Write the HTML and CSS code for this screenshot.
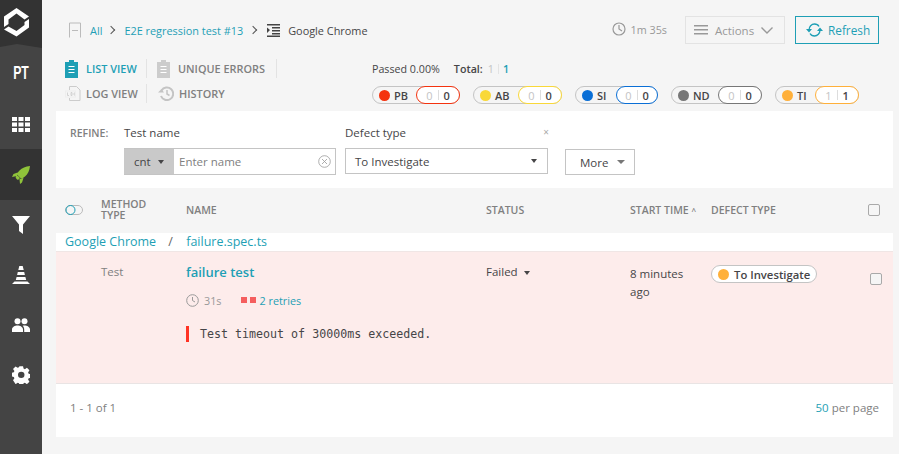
FILE: index.html
```html
<!DOCTYPE html>
<html>
<head>
<meta charset="UTF-8">
<title>Google Chrome - failure test</title>
<link rel="stylesheet" href="styles.css">
</head>
<body>
<div class="app">
	<nav class="sidebar">
		<div class="logo">
			<svg width="42" height="48" viewBox="0 0 42 48"><path d="M0 0H42V48L17 44L0 47Z" fill="#333"/><path d="M4 16.500V27L8.500 24V19.500L16.500 13.500L24.500 19.500L29 16.500L16.500 8ZM29 19V27.500L16.500 36.500L4 29.500L8.500 26.500L16.500 31L24.500 25V22Z" fill="#fff"/></svg>
		</div>
		<div class="nav-item nav-pt">PT</div>
		<div class="nav-item">
			<svg width="18" height="15" viewBox="0 0 18 15" fill="#fff"><path d="M0 0h5v4H0zM6.500 0h5v4h-5zM13 0h5v4h-5zM0 5.500h5v4H0zM6.500 5.500h5v4h-5zM13 5.500h5v4h-5zM0 11h5v4H0zM6.500 11h5v4h-5zM13 11h5v4h-5z"/></svg>
		</div>
		<div class="nav-item nav-active">
			<svg width="18" height="18" viewBox="0 0 18 18" fill="#8fc33a"><path d="M18 0C13.500.5 10 2 7.500 4.500L4.500 8l5 5 3.500-2.500C16 8 17.500 4.500 18 0zM5.500 6.500L1.500 8 0 11l5-1zM11.500 12L10 16.500 8 18l-.5-5zM3.500 11l2-1.500L8 12l-2 2-1.500-1z"/></svg>
		</div>
		<div class="nav-item">
			<svg width="18" height="18" viewBox="0 0 18 18" fill="#fff"><path d="M0 0h18L11 8.500V18L7 15V8.500z"/></svg>
		</div>
		<div class="nav-item">
			<svg width="18" height="18" viewBox="0 0 18 18" fill="#fff"><path d="M7.300 0h3.400l1 4H6.300zM5.800 6h6.400l.7 3H5.100zM4.600 11h8.800l.8 3H3.800zM2.500 15.500h13L18 18H0z"/></svg>
		</div>
		<div class="nav-item">
			<svg width="18" height="14" viewBox="0 0 18 14" fill="#fff"><circle cx="5.500" cy="3.200" r="3"/><circle cx="12.500" cy="3.200" r="3"/><path d="M0 14v-2.500C0 9 3 7.500 5.500 7.500S11 9 11 11.500V14zM12.200 14v-2.500c0-1.500-.5-2.800-1.500-3.800.6-.1 1.200-.2 1.800-.2 2.500 0 5.500 1.500 5.500 4V14z"/></svg>
		</div>
		<div class="nav-item">
			<svg width="18" height="18" viewBox="0 0 24 24" fill="#fff"><path fill-rule="evenodd" d="M9.500 0h5l.7 3.300 1.800.8L19.900 2.200l3.500 3.500-1.900 2.900.8 1.800 3.300.6v5l-3.300.7-.8 1.800 1.900 2.900-3.500 3.500-2.900-1.900-1.800.8-.7 3.300h-5l-.6-3.300-1.800-.8-2.900 1.900L.6 19.500l1.900-2.900-.8-1.800L-1.600 14.100v-5l3.300-.6.800-1.800L.6 3.800 4.100.3 7 2.200l1.800-.8zM12 7.500a4.500 4.500 0 1 0 0 9 4.500 4.500 0 0 0 0-9z" transform="translate(.8 .3) scale(.96)"/></svg>
		</div>
	</nav>

	<main class="content">
		<div class="topbar">
			<div class="crumbs">
				<svg class="crumb-icon" width="12" height="16" viewBox="0 0 12 16" fill="none" stroke="#bbb"><path d="M.5 15.500V1h11v14.500M3 8.500h6"/></svg>
				<a class="link crumb-all">All</a>
				<span class="crumb-sep"></span>
				<a class="link">E2E regression test #13</a>
				<span class="crumb-sep crumb-sep-last"></span>
				<svg class="crumb-icon" width="13" height="13" viewBox="0 0 13 13" fill="#444"><path d="M0 0h13v1.500H0zM5 3h8v1.500H5zM5 6h8v1.500H5zM5 9h8v1.500H5zM0 11.500h13V13H0zM0 3.500L3 6 0 9z"/></svg>
				<span class="crumb-name">Google Chrome</span>
			</div>
			<div class="top-actions">
				<span class="duration">
					<svg width="14" height="14" viewBox="0 0 14 14" fill="none" stroke="#999" stroke-width="1.200"><circle cx="7" cy="7" r="6"/><path d="M7 3v4l3 2"/></svg>
					1m 35s
				</span>
				<div class="btn btn-actions">
					<svg width="14" height="10" viewBox="0 0 14 10" fill="#999"><path d="M0 0h14v1.500H0zM0 4h14v1.500H0zM0 8h14v1.500H0z"/></svg>
					<span>Actions</span>
					<svg width="12" height="7" viewBox="0 0 12 7" fill="none" stroke="#999" stroke-width="1.400"><path d="M.5.500L6 6 11.500.500"/></svg>
				</div>
				<div class="btn btn-refresh">
					<svg width="17" height="14" viewBox="0 0 17 14" fill="none" stroke="#1e9fb5" stroke-width="1.300"><path d="M3 7C3 3.500 5.500 1 8.500 1c2 0 3.700 1 4.500 2.500M14 7c0 3.500-2.500 6-5.500 6-2 0-3.700-1-4.500-2.500"/><path d="M0 6h6L3 9.500zM11 8h6l-3-3.500z" fill="#1e9fb5" stroke="none"/></svg>
					<span>Refresh</span>
				</div>
			</div>
		</div>

		<div class="summary">
			<div class="views">
				<div class="view-row">
					<div class="view view-first active">
						<svg width="13" height="18" viewBox="0 0 13 18"><path d="M0 2h4V0h5v2h4v16H0z" fill="#1e9fb5"/><path d="M3.500 6.500h6M3.500 9.500h6M3.500 12.500h6" stroke="#fff" stroke-width="1.200"/></svg>
						<span>LIST VIEW</span>
					</div>
					<div class="view view-second">
						<svg width="13" height="18" viewBox="0 0 13 18"><path d="M0 2h4V0h5v2h4v16H0z" fill="#ccc"/><path d="M3.500 6.500h6M3.500 9.500h6M3.500 12.500h6" stroke="#fff" stroke-width="1.200"/></svg>
						<span>UNIQUE ERRORS</span>
					</div>
				</div>
				<div class="view-row">
					<div class="view view-first">
						<svg width="16" height="15" viewBox="0 0 16 15" fill="none" stroke="#ccc"><path d="M4.500 4V.5h7l3.500 3.500v10.500H4.500V12"/><rect x=".5" y="5" width="10" height="6" fill="#f5f5f5" stroke="#eee"/><path d="M2.500 6.500v3h1.500M6 6.500h1v3H6zM10 7H9v2h1" stroke-width=".8"/></svg>
						<span>LOG VIEW</span>
					</div>
					<div class="view view-second view-history">
						<svg width="16" height="15" viewBox="0 0 16 15" fill="none" stroke="#c4c4c4" stroke-width="2"><path d="M3.500 4.500A6.300 6.300 0 1 1 3 10"/><path d="M9 4v4l2.500 1.500" stroke-width="1.500"/><path d="M0 6.500h6L3.500 3z" fill="#c4c4c4" stroke="none"/></svg>
						<span>HISTORY</span>
					</div>
				</div>
			</div>
			<div class="stats">
				<div class="totals">
					<span class="passed">Passed 0.00%</span>
					<span class="total-label">Total:</span>
					<span class="num-light">1</span><span class="num-sep"></span><span class="num-link">1</span>
				</div>
				<div class="pills">
					<div class="pill pill-pb"><i class="dot"></i><b>PB</b><span class="pill-count"><em>0</em><s></s><strong>0</strong></span></div>
					<div class="pill pill-ab"><i class="dot"></i><b>AB</b><span class="pill-count"><em>0</em><s></s><strong>0</strong></span></div>
					<div class="pill pill-si"><i class="dot"></i><b>SI</b><span class="pill-count"><em>0</em><s></s><strong>0</strong></span></div>
					<div class="pill pill-nd"><i class="dot"></i><b>ND</b><span class="pill-count"><em>0</em><s></s><strong>0</strong></span></div>
					<div class="pill pill-ti"><i class="dot"></i><b>TI</b><span class="pill-count"><em>1</em><s></s><strong>1</strong></span></div>
				</div>
			</div>
		</div>

		<div class="refine">
			<div class="refine-label">REFINE:</div>
			<div class="field field-name">
				<div class="field-title">Test name</div>
				<div class="input-group">
					<div class="cond">cnt <span class="caret caret-dark"></span></div>
					<div class="input-text">Enter name</div>
					<svg class="clear" width="13" height="13" viewBox="0 0 13 13" fill="none" stroke="#999" stroke-width=".8"><circle cx="6.500" cy="6.500" r="5.800"/><path d="M4 4l5 5M9 4l-5 5"/></svg>
				</div>
			</div>
			<div class="field field-defect">
				<div class="field-title">Defect type <span class="field-close">×</span></div>
				<div class="select">To Investigate <span class="caret caret-dark"></span></div>
			</div>
			<div class="more">More <span class="caret"></span></div>
		</div>

		<div class="grid table-head">
			<svg class="toggle" width="18" height="10" viewBox="0 0 18 10" fill="none"><rect x=".5" y=".5" width="17" height="9" rx="4.500" stroke="#bbb"/><circle cx="5.500" cy="5" r="4.500" stroke="#1e9fb5"/></svg>
			<div class="th th-method">METHOD TYPE</div>
			<div class="th">NAME</div>
			<div class="th">STATUS</div>
			<div class="th">START TIME <span class="sort">^</span></div>
			<div class="th">DEFECT TYPE</div>
			<div class="check check-head"></div>
		</div>

		<div class="group-row">
			<a class="link">Google Chrome</a>
			<span class="group-sep">/</span>
			<a class="link">failure.spec.ts</a>
		</div>

		<div class="grid test-row">
			<div></div>
			<div class="method">Test</div>
			<div class="name-cell">
				<a class="link test-name">failure test</a>
				<div class="test-meta">
					<svg width="13" height="13" viewBox="0 0 13 13" fill="none" stroke="#999" stroke-width="1"><circle cx="6.500" cy="6.500" r="5.800"/><path d="M6.500 3v3.500l2.500 1.500"/></svg>
					<span class="test-dur">31s</span>
					<i class="retry"></i><i class="retry"></i>
					<a class="link retries">2 retries</a>
				</div>
				<div class="message">Test timeout of 30000ms exceeded.</div>
			</div>
			<div class="status">Failed <span class="caret caret-dark"></span></div>
			<div class="time">8 minutes ago</div>
			<div><span class="badge"><i class="dot"></i>To Investigate</span></div>
			<div class="check check-row"></div>
		</div>

		<div class="pager">
			<span>1 - 1 of 1</span>
			<span><a class="link">50</a> per page</span>
		</div>
	</main>
</div>
</body>
</html>
```
FILE: styles.css
```css
* {
	box-sizing: border-box;
}

html, body {
	margin: 0;
	height: 100%;
}

body {
	font-family: "Open Sans", sans-serif;
	font-size: 11.500px;
	color: #464547;
	background-color: #f5f5f5;
	overflow: hidden;
}

.app {
	display: flex;
	height: 454px;
}

.link {
	color: #1e9fb5;
	text-decoration: none;
}

.caret {
	display: inline-block;
	width: 0;
	height: 0;
	border-left: 4px solid transparent;
	border-right: 4px solid transparent;
	border-top: 4px solid #777;
	vertical-align: middle;
}

.caret-dark {
	border-left-width: 3.500px;
	border-right-width: 3.500px;
	border-top-color: #464547;
}

/* sidebar */
.sidebar {
	width: 42px;
	flex: none;
	background-color: #444;
}

.logo {
	height: 48px;
}

.logo svg {
	display: block;
}

.nav-item {
	height: 50px;
	display: flex;
	align-items: center;
	justify-content: center;
	color: #fff;
}

.nav-pt {
	height: 51px;
	font-family: "Liberation Sans", sans-serif;
	font-size: 18px;
	font-weight: bold;
	transform: scaleX(.68);
}

.nav-active {
	background-color: #333;
	height: 51px;
}

/* main column */
.content {
	width: 837px;
	margin-left: 14px;
	display: flex;
	flex-direction: column;
}

.topbar {
	height: 53px;
	padding: 16px 14px 0 13px;
	display: flex;
	justify-content: space-between;
}

.crumbs {
	height: 28px;
	display: flex;
	align-items: center;
	font-size: 10.900px;
}

.crumb-all {
	margin-left: 9px;
}

.crumb-sep {
	width: 6px;
	height: 6px;
	margin: 0 10px 0 6px;
	border-top: 1px solid #555;
	border-right: 1px solid #555;
	transform: rotate(45deg);
}

.crumb-sep-last {
	margin: 0 11px 0 7px;
}

.crumb-name {
	margin-left: 8px;
}

.top-actions {
	display: flex;
	align-items: center;
	height: 28px;
}

.duration {
	display: flex;
	align-items: center;
	gap: 5px;
	color: #999;
	font-size: 10.800px;
	margin: -2px 18px 0 0;
}

.btn {
	height: 28px;
	display: flex;
	align-items: center;
}

.btn-actions {
	width: 100px;
	padding: 0 11px 0 8px;
	justify-content: space-between;
	border: 1px solid #e3e3e3;
	color: #999;
	margin-right: 10px;
}

.btn-refresh {
	width: 84px;
	padding-left: 10px;
	gap: 5px;
	border: 1px solid #1e9fb5;
	color: #1e9fb5;
	font-size: 11.800px;
}

.summary {
	height: 58px;
	display: flex;
	padding-left: 9px;
}

.views {
	width: 307px;
	padding-top: 2px;
}

.view-row {
	display: flex;
	height: 25px;
}

.view {
	display: flex;
	align-items: center;
	gap: 8px;
	font-size: 10.900px;
	font-weight: 600;
	color: #808080;
}

.view.active {
	color: #1e9fb5;
}

.view-first {
	width: 82px;
	border-right: 1px solid #e3e3e3;
	height: 19px;
	margin-top: 4px;
}

.view-first svg {
	flex: none;
}

.view-row + .view-row .view-first {
	gap: 5px;
}

.view-second {
	width: 130px;
	padding-left: 10px;
	border-right: 1px solid #e3e3e3;
	height: 19px;
	margin-top: 4px;
}

.view-history {
	border-right: 0;
	gap: 5px;
	padding-left: 11px;
}

.stats {
	font-size: 10.700px;
}

.totals {
	height: 21px;
	display: flex;
	align-items: center;
	margin-top: 5px;
}

.total-label {
	margin-left: 14px;
	margin-right: 5px;
	font-weight: 600;
}

.num-light {
	color: #c4c4c4;
}

.num-sep {
	width: 1px;
	height: 10px;
	margin: 0 4px;
	background-color: #e3e3e3;
}

.num-link {
	color: #1e9fb5;
	font-weight: 600;
}

.pills {
	display: flex;
	gap: 13px;
	margin-top: 7px;
}

.pill {
	height: 18px;
	border: 1px solid #c4c4c4;
	border-radius: 9px;
	display: flex;
	align-items: center;
	padding-left: 6px;
	font-size: 11px;
	--c: #f4330f;
}

.pill b {
	font-weight: 600;
	margin-left: 4px;
	flex: 1;
}

.dot {
	display: block;
	width: 11px;
	height: 11px;
	border-radius: 50%;
	background-color: var(--c);
	flex: none;
}

.pill-pb { width: 88px; }
.pill-ab { width: 89px; --c: #f9d838; }
.pill-si { width: 83px; --c: #0a6fd6; }
.pill-nd { width: 91px; --c: #777; }
.pill-ti { width: 84px; --c: #ffb03a; }

.pill-count {
	width: 44px;
	height: 18px;
	margin: 0 -1px 0 0;
	border: 1px solid var(--c);
	border-radius: 9px;
	display: flex;
	align-items: center;
	justify-content: center;
	background-color: #fff;
}

.pill-si .pill-count { width: 42px; }

.pill-count em {
	font-style: normal;
	color: #c4c4c4;
}

.pill-count s {
	width: 1px;
	height: 10px;
	margin: 0 5px;
	background-color: #ddd;
}

.pill-count strong {
	font-weight: 600;
}

/* refine */
.refine {
	height: 77px;
	background-color: #fff;
	display: flex;
	padding: 14px 0 0 14px;
}

.refine-label {
	width: 54px;
	font-size: 10.500px;
	font-weight: 600;
	color: #808080;
	padding-top: 1px;
}

.field-title {
	height: 23px;
	position: relative;
}

.field-name {
	width: 212px;
}

.input-group {
	height: 27px;
	border: 1px solid #c4c4c4;
	display: flex;
	align-items: center;
}

.cond {
	width: 50px;
	height: 100%;
	background-color: #c9c9c9;
	display: flex;
	align-items: center;
	gap: 7px;
	padding-left: 10px;
	margin-left: -1px;
}

.input-text {
	flex: 1;
	padding-left: 5px;
	color: #808080;
}

.clear {
	margin-right: 4px;
}

.field-defect {
	width: 203px;
	margin-left: 9px;
}

.field-close {
	position: absolute;
	right: -1px;
	top: 0;
	color: #aaa;
	font-size: 10px;
}

.select {
	height: 26px;
	border: 1px solid #c4c4c4;
	display: flex;
	align-items: center;
	justify-content: space-between;
	padding: 0 10px 0 9px;
}

.more {
	width: 70px;
	height: 26px;
	margin: 24px 0 0 17px;
	border: 1px solid #c4c4c4;
	display: flex;
	align-items: center;
	gap: 9px;
	padding-left: 14px;
}

/* table */
.grid {
	display: grid;
	grid-template-columns: 45px 85px 300px 144px 81px 157px 25px;
}

.table-head {
	height: 45px;
	align-items: center;
	padding-bottom: 1px;
}

.toggle {
	margin-left: 9px;
}

.th {
	font-size: 10.500px;
	font-weight: 600;
	color: #808080;
}

.th-method {
	line-height: 11px;
	width: 50px;
}

.sort {
	font-size: 8px;
}

.check {
	width: 12px;
	height: 12px;
	border: 1px solid #a9a9a9;
	border-radius: 2px;
}

.check-row {
	margin: 10px 0 0 2px;
	background-color: #f5f5f5;
}

.group-row {
	height: 18px;
	background-color: #fff;
	padding-left: 9px;
	font-size: 12.500px;
	line-height: 17px;
}

.group-sep {
	margin: 0 10px 0 9px;
	color: #666;
}

.test-row {
	height: 133px;
	background-color: #fdeceb;
	border-top: 1px solid #f0e6e5;
	border-bottom: 1px solid #e9e4e4;
	padding-top: 11px;
}

.method {
	color: #808080;
	line-height: 18px;
}

.test-name {
	display: block;
	font-size: 13px;
	font-weight: 600;
	line-height: 18px;
}

.test-meta {
	display: flex;
	align-items: center;
	margin-top: 10px;
	height: 18px;
	font-size: 10.800px;
	color: #999;
}

.test-dur {
	margin-left: 5px;
	margin-right: 19px;
}

.retry {
	width: 6px;
	height: 6px;
	margin-right: 3px;
	background-color: #f55e5e;
}

.retries {
	margin-left: 1px;
}

.message {
	margin-top: 17px;
	height: 16px;
	border-left: 3px solid #ff3324;
	padding-left: 11px;
	font-family: "DejaVu Sans Mono", monospace;
	font-size: 11.650px;
	line-height: 16px;
	white-space: nowrap;
}

.status {
	line-height: 18px;
}

.status .caret {
	margin-left: 3px;
}

.time {
	width: 70px;
	line-height: 18px;
	margin-top: 2px;
}

.badge {
	display: inline-flex;
	align-items: center;
	height: 18px;
	width: 106px;
	margin-top: 2px;
	padding-left: 6px;
	gap: 5px;
	border: 1px solid #c4c4c4;
	border-radius: 9px;
	background-color: #fff;
	font-weight: 600;
	font-size: 11.300px;
	--c: #ffb03a;
}

.pager {
	height: 53px;
	background-color: #fff;
	display: flex;
	justify-content: space-between;
	align-items: center;
	padding: 0 14px 6px;
	color: #808080;
}
```
